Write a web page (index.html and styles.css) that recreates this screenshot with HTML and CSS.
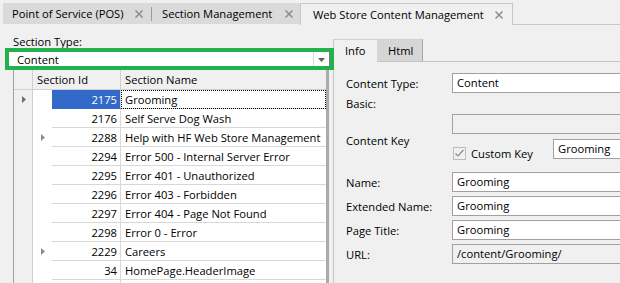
FILE: index.html
```html
<!DOCTYPE html>
<html>
<head>
<meta charset="utf-8">
<link rel="stylesheet" href="styles.css">
</head>
<body>
<div class="doc-tabs">
  <div class="dtab dtab-pos"><span>Point of Service (POS)</span><svg class="x" viewBox="0 0 8 8"><path d="M0.5 0.5L7.5 7.5M7.5 0.5L0.5 7.5"/></svg></div>
  <div class="dtab-sep"></div>
  <div class="dtab dtab-sec"><span>Section Management</span><svg class="x" viewBox="0 0 8 8"><path d="M0.5 0.5L7.5 7.5M7.5 0.5L0.5 7.5"/></svg></div>
  <div class="dtab dtab-active"><span>Web Store Content Management</span><svg class="x" viewBox="0 0 8 8"><path d="M0.5 0.5L7.5 7.5M7.5 0.5L0.5 7.5"/></svg></div>
  <div class="dtab-rest"></div>
</div>
<div class="main">
  <div class="left">
    <div class="lbl-type">Section Type:</div>
    <div class="combo">
      <span class="combo-text">Content</span>
      <div class="combo-btn"><svg viewBox="0 0 7 4"><path d="M0 0H7L3.5 4Z"/></svg></div>
      <div class="highlight"></div>
    </div>
    <div class="grid">
      <div class="ghead">
        <div class="rh"></div>
        <div class="hid">Section Id</div>
        <div class="hname">Section Name</div>
      </div>
      <div class="grow">
        <div class="rh"><svg class="cur" viewBox="0 0 4 7"><path d="M0 0L4 3.5L0 7Z"/></svg></div>
        <div class="tree"></div>
        <div class="id sel">2175</div>
        <div class="name focus">Grooming</div>
      </div>
      <div class="grow">
        <div class="rh"></div><div class="tree"></div>
        <div class="id">2176</div><div class="name">Self Serve Dog Wash</div>
      </div>
      <div class="grow">
        <div class="rh"></div><div class="tree"><svg class="exp" viewBox="0 0 4 7"><path d="M0 0L4 3.5L0 7Z"/></svg></div>
        <div class="id">2288</div><div class="name">Help with HF Web Store Management</div>
      </div>
      <div class="grow">
        <div class="rh"></div><div class="tree"></div>
        <div class="id">2294</div><div class="name">Error 500 - Internal Server Error</div>
      </div>
      <div class="grow">
        <div class="rh"></div><div class="tree"></div>
        <div class="id">2295</div><div class="name">Error 401 - Unauthorized</div>
      </div>
      <div class="grow">
        <div class="rh"></div><div class="tree"></div>
        <div class="id">2296</div><div class="name">Error 403 - Forbidden</div>
      </div>
      <div class="grow">
        <div class="rh"></div><div class="tree"></div>
        <div class="id">2297</div><div class="name">Error 404 - Page Not Found</div>
      </div>
      <div class="grow">
        <div class="rh"></div><div class="tree"></div>
        <div class="id">2298</div><div class="name">Error 0 - Error</div>
      </div>
      <div class="grow">
        <div class="rh"></div><div class="tree"><svg class="exp" viewBox="0 0 4 7"><path d="M0 0L4 3.5L0 7Z"/></svg></div>
        <div class="id">2229</div><div class="name">Careers</div>
      </div>
      <div class="grow">
        <div class="rh"></div><div class="tree"></div>
        <div class="id">34</div><div class="name">HomePage.HeaderImage</div>
      </div>
      <div class="grow grow-last">
        <div class="rh"></div><div class="tree"></div>
        <div class="id"></div><div class="name"></div>
      </div>
    </div>
  </div>
  <div class="right">
    <div class="tabctl">
      <div class="ttabs">
        <div class="ttab ttab-info">Info</div>
        <div class="ttab ttab-html">Html</div>
        <div class="ttabs-rest"></div>
      </div>
      <div class="tpanel">
        <div class="frow">
          <div class="flbl">Content Type:</div>
          <div class="input">Content</div>
        </div>
        <div class="frow frow-basic">
          <div class="flbl">Basic:</div>
        </div>
        <div class="frow">
          <div class="flbl"></div>
          <div class="input disabled"></div>
        </div>
        <div class="frow frow-key">
          <div class="flbl flbl-key">Content Key</div>
          <div class="keybox">
            <div class="chk">
              <svg class="chkbox" viewBox="0 0 13 13"><rect x="0.5" y="0.5" width="12" height="12"/><path d="M2.5 6.5L5 9L10.5 3"/></svg>
              <span>Custom Key</span>
            </div>
            <div class="input input-key">Grooming</div>
          </div>
        </div>
        <div class="frow">
          <div class="flbl">Name:</div>
          <div class="input">Grooming</div>
        </div>
        <div class="frow gap">
          <div class="flbl">Extended Name:</div>
          <div class="input">Grooming</div>
        </div>
        <div class="frow gap">
          <div class="flbl">Page Title:</div>
          <div class="input">Grooming</div>
        </div>
        <div class="frow gap">
          <div class="flbl">URL:</div>
          <div class="input disabled">/content/Grooming/</div>
        </div>
      </div>
    </div>
  </div>
</div>
</body>
</html>
```

FILE: styles.css
```css
* { box-sizing: border-box; }
html, body {
  margin: 0;
  padding: 0;
  width: 620px;
  height: 283px;
  overflow: hidden;
  background: #f0f0f0;
  font-family: "Open Sans", "Noto Sans", sans-serif;
  font-size: 11.2px;
  color: #000;
}

/* document tabs */
.doc-tabs {
  display: flex;
  height: 25px;
  padding-top: 3px;
  padding-left: 3px;
}
.dtab {
  display: flex;
  align-items: center;
  height: 21px;
  background: #dadada;
  white-space: nowrap;
}
.dtab .x {
  width: 8px;
  height: 8px;
  margin-left: auto;
  stroke: #8c8c8c;
  stroke-width: 1.5;
  fill: none;
}
.dtab-pos { width: 148px; padding-left: 9px; padding-right: 8px; }
.dtab-sep { width: 1px; height: 21px; background: #dadada; position: relative; }
.dtab-sep::after {
  content: "";
  position: absolute;
  left: 0; top: 4px;
  width: 1px; height: 14px;
  background: #9a9a9a;
}
.dtab-sec { width: 148px; padding-left: 10px; padding-right: 7px; }
.dtab-active {
  width: 213px;
  height: 22px;
  background: #f0f0f0;
  border: 1px solid #c6c6c6;
  border-bottom: none;
  padding-left: 12px;
  padding-right: 9px;
}
.dtab-rest {
  flex: 1;
  height: 22px;
  border-bottom: 1px solid #c6c6c6;
}

.main {
  display: flex;
  height: 258px;
  overflow: hidden;
}

/* left pane */
.left {
  width: 333px;
  flex: none;
}
.lbl-type {
  height: 24px;
  padding-top: 9px;
  padding-left: 13px;
  line-height: 16px;
}
.combo {
  position: relative;
  margin-left: 8px;
  width: 322px;
  height: 21px;
  background: #fff;
  border: 1px solid #7a7a7a;
  display: flex;
  align-items: center;
  padding-left: 8px;
}
.combo-text { flex: 1; }
.combo-btn {
  width: 16px;
  height: 19px;
  border-left: 1px solid #dcdcdc;
  display: flex;
  align-items: center;
  justify-content: center;
}
.combo-btn svg { width: 7px; height: 4px; fill: #606060; }
.highlight {
  position: absolute;
  left: -4px;
  top: -2px;
  width: 329px;
  height: 22px;
  border: 4px solid #22b14c;
}

.grid {
  margin-left: 13px;
  width: 316px;
  border-left: 1px solid #a0a0a0;
  border-right: 3px solid #ababab;
}
.ghead {
  display: flex;
  height: 20px;
  border-bottom: 1px solid #d0d0d0;
  line-height: 20px;
}
.ghead .rh { height: 19px; }
.hid {
  width: 88px;
  padding-left: 4px;
  border-right: 1px solid #d0d0d0;
}
.hname { flex: 1; padding-left: 4px; }
.rh {
  width: 19px;
  flex: none;
  border-right: 1px solid #d0d0d0;
  display: flex;
  align-items: center;
  justify-content: center;
}
.grow {
  display: flex;
  height: 19px;
  line-height: 17px;
}
.grow-last { height: 5px; }
.tree {
  width: 19px;
  flex: none;
  background: #fff;
  display: flex;
  align-items: center;
  justify-content: center;
}
.cur { width: 4px; height: 7px; fill: #6e6e6e; margin-left: 1px; }
.exp { width: 4px; height: 7px; fill: #8c8c8c; margin-left: 1px; }
.id {
  width: 69px;
  flex: none;
  background: #fff;
  text-align: right;
  padding-right: 3px;
  padding-top: 1px;
  border-right: 1px solid #d8d8d8;
  border-bottom: 1px solid #d8d8d8;
}
.id.sel {
  background: #3369c8;
  color: #fff;
  border-bottom-color: #3369c8;
}
.name {
  flex: 1;
  background: #fff;
  padding-left: 4px;
  padding-top: 1px;
  border-bottom: 1px solid #d8d8d8;
  white-space: nowrap;
}
.name.focus {
  outline: 1px dotted #000;
  outline-offset: -1px;
}

/* right pane */
.right {
  flex: 1;
  min-width: 0;
  padding-top: 14px;
}
.tabctl {
  border-left: 1px solid #c6c6c6;
  height: 244px;
}
.ttabs {
  display: flex;
  height: 23px;
}
.ttab {
  line-height: 22px;
  border-top: 1px solid #d0d0d0;
}
.ttab-info {
  width: 43px;
  padding-left: 11px;
  background: #f0f0f0;
}
.ttab-html {
  width: 46px;
  padding-left: 11px;
  background: #d6d6d6;
  border-right: 1px solid #a8a8a8;
  border-bottom: 1px solid #c6c6c6;
}
.ttabs-rest {
  flex: 1;
  border-bottom: 1px solid #c6c6c6;
}
.tpanel {
  padding-left: 12px;
  padding-top: 11px;
}
.frow {
  display: flex;
  align-items: center;
  height: 20px;
}
.frow.gap { margin-top: 4px; }
.frow-basic { height: 21px; }
.flbl {
  width: 106px;
  flex: none;
  white-space: nowrap;
}
.input {
  width: 168px;
  flex: none;
  height: 20px;
  background: #fff;
  border: 1px solid #a0a0a0;
  border-right: none;
  padding-left: 4px;
  line-height: 18px;
  white-space: nowrap;
  overflow: hidden;
}
.input.disabled { background: #f0f0f0; }
.frow-key {
  height: 38px;
  align-items: flex-start;
}
.flbl-key { line-height: 14px; }
.keybox {
  display: flex;
  align-items: flex-start;
}
.chk {
  display: flex;
  align-items: center;
  margin-top: 13px;
  width: 100px;
  height: 13px;
  margin-left: 1px;
}
.chkbox {
  width: 13px;
  height: 13px;
  margin-right: 5px;
}
.chkbox rect { fill: #f0f0f0; stroke: #bcbcbc; }
.chkbox path { fill: none; stroke: #8a8a8a; stroke-width: 1.2; }
.input-key { margin-top: 5px; width: 67px; }
```
